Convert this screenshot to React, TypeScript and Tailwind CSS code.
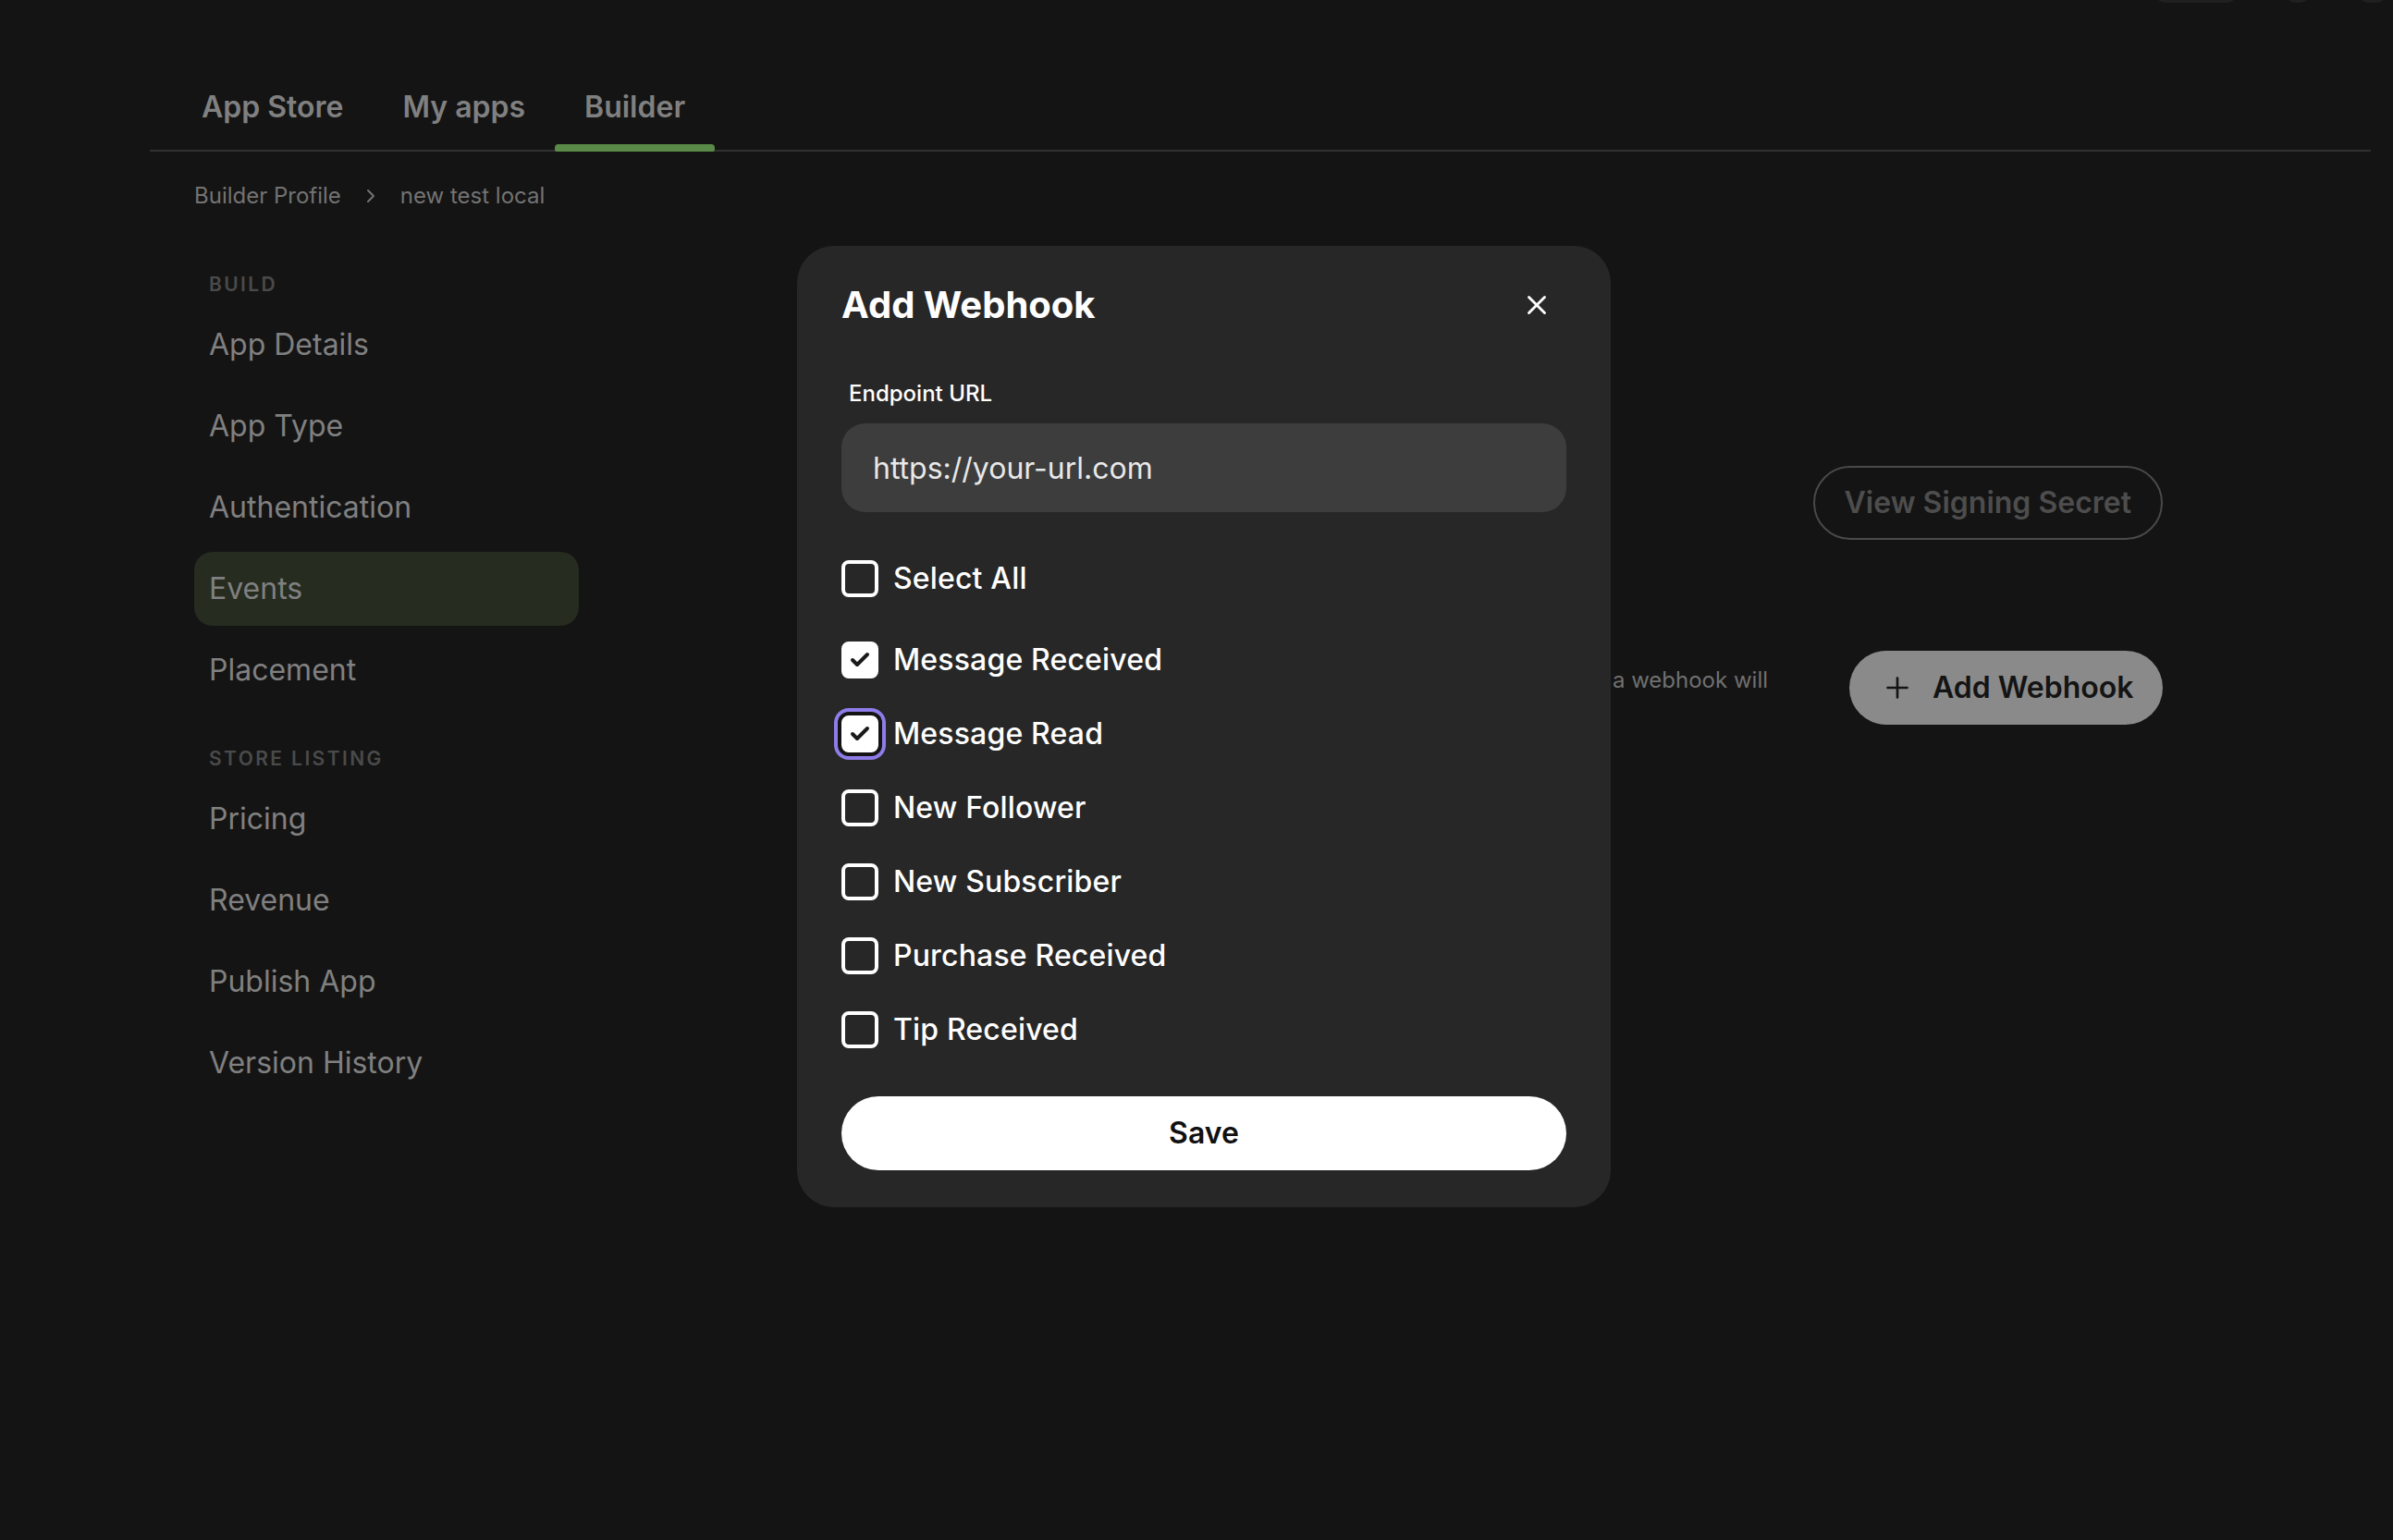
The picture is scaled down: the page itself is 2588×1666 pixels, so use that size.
import { Check, ChevronRight, Plus, X } from "lucide-react"

const buildLinks = ["App Details", "App Type", "Authentication", "Events", "Placement"]
const storeLinks = ["Pricing", "Revenue", "Publish App", "Version History"]

const events = [
  { label: "Message Received", checked: true },
  { label: "Message Read", checked: true, focused: true },
  { label: "New Follower" },
  { label: "New Subscriber" },
  { label: "Purchase Received" },
  { label: "Tip Received" },
]

function Checkbox({ checked, focused }: { checked?: boolean; focused?: boolean }) {
  return (
    <span
      className={`flex h-[40px] w-[40px] shrink-0 items-center justify-center rounded-[8px] border-[4px] border-white ${
        checked ? "bg-white" : ""
      } ${focused ? "shadow-[0_0_0_4px_#141414,0_0_0_8px_#8f7ce8]" : ""}`}
    >
      {checked && <Check size={24} strokeWidth={4} className="text-[#1a1a1a]" />}
    </span>
  )
}

function SideLink({ label }: { label: string }) {
  const active = label === "Events"
  return (
    <a
      className={`mb-[8px] flex h-[80px] items-center rounded-[20px] px-[16px] text-[32px] text-[#808080] ${
        active ? "bg-[#262c20]" : ""
      }`}
    >
      {label}
    </a>
  )
}

export default function App() {
  return (
    <div className="relative h-[1666px] w-full overflow-hidden bg-[#141414] font-['Inter',sans-serif]">
      {/* Header, scrolled almost out of view */}
      <div className="flex h-[3px] items-end justify-end gap-[39px] overflow-hidden">
        <div className="h-[40px] w-[102px] shrink-0 rounded-full bg-[#202020]" />
        <div className="h-[40px] w-[40px] shrink-0 rounded-full bg-[#202020]" />
        <div className="h-[40px] w-[44px] shrink-0 rounded-full bg-[#202020]" />
      </div>

      {/* Tabs */}
      <div className="relative ml-[162px] mr-[24px] flex h-[161px] items-end border-b-2 border-[#303030] pl-[24px]">
        <a className="px-[32px] pb-[26px] text-[32px] leading-[40px] font-semibold text-[#808080]">App Store</a>
        <a className="px-[32px] pb-[26px] text-[32px] leading-[40px] font-semibold text-[#808080]">My apps</a>
        <a className="relative px-[32px] pb-[26px] text-[32px] leading-[40px] font-semibold text-[#808080]">
          Builder
          <span className="absolute inset-x-0 bottom-[-2px] h-[8px] rounded-t-[4px] rounded-b-[2px] bg-[#5a8a47]" />
        </a>
      </div>

      {/* Breadcrumb */}
      <div className="ml-[210px] mt-[32px] flex h-[32px] items-center text-[24px] text-[#737373]">
        <span>Builder Profile</span>
        <ChevronRight size={24} strokeWidth={2} className="mx-[20px] text-[#737373]" />
        <span>new test local</span>
      </div>

      <div className="mt-[68px] flex">
        {/* Sidebar */}
        <aside className="ml-[210px] w-[416px] shrink-0">
          <p className="mb-[13px] px-[16px] text-[21px] leading-[24px] font-semibold tracking-[2.4px] text-[#4a4a4a]">BUILD</p>
          {buildLinks.map((link) => (
            <SideLink key={link} label={link} />
          ))}
          <p className="mb-[13px] mt-[44px] px-[16px] text-[21px] leading-[24px] font-semibold tracking-[2.4px] text-[#4a4a4a]">STORE LISTING</p>
          {storeLinks.map((link) => (
            <SideLink key={link} label={link} />
          ))}
        </aside>

        {/* Content */}
        <main className="flex min-w-0 flex-1 flex-col items-end pr-[249px] pt-[208px]">
          <button className="flex h-[80px] items-center rounded-full border-2 border-[#4a4a4a] px-[32px] text-[32px] font-semibold text-[#4d4d4d]">
            View Signing Secret
          </button>
          <div className="mt-[120px] flex items-start gap-[88px]">
            <p className="mt-[16px] text-[24px] leading-[32px] text-[#707070]">a webhook will</p>
            <button className="flex h-[80px] items-center gap-[20px] rounded-full bg-[#8a8a8a] pl-[34px] pr-[31.5px] text-[32px] font-semibold text-[#141414]">
              <Plus size={36} strokeWidth={1.75} />
              Add Webhook
            </button>
          </div>
        </main>
      </div>

      {/* Modal */}
      <div className="absolute left-[862px] top-[266px] h-[1040px] w-[880px] rounded-[40px] bg-[#272727] px-[48px] pt-[40px]">
        <div className="flex h-[48px] items-center justify-between">
          <h2 className="text-[40px] font-bold text-white">Add Webhook</h2>
          <X size={34} strokeWidth={2} className="mr-[15px] text-white" />
        </div>
        <label className="mt-[56px] block pl-[8px] text-[24px] leading-[32px] font-medium text-white">Endpoint URL</label>
        <div className="mt-[16px] flex h-[96px] items-center rounded-[26px] bg-[#3d3d3d] px-[34px] pt-[2px] text-[32px] text-[#e8e8e8]">
          https://your-url.com
        </div>
        <div className="mt-[52px] flex h-[40px] items-center gap-[16px]">
          <Checkbox />
          <span className="text-[32px] font-medium tracking-[0.16px] text-white">Select All</span>
        </div>
        <div className="mt-[48px] flex flex-col gap-[40px]">
          {events.map((event) => (
            <div key={event.label} className="flex h-[40px] items-center gap-[16px]">
              <Checkbox checked={event.checked} focused={event.focused} />
              <span className="text-[32px] font-medium tracking-[0.16px] text-white">{event.label}</span>
            </div>
          ))}
        </div>
        <button className="mt-[52px] h-[80px] w-full rounded-full bg-white text-[32px] font-semibold text-[#111111]">
          Save
        </button>
      </div>
    </div>
  )
}
